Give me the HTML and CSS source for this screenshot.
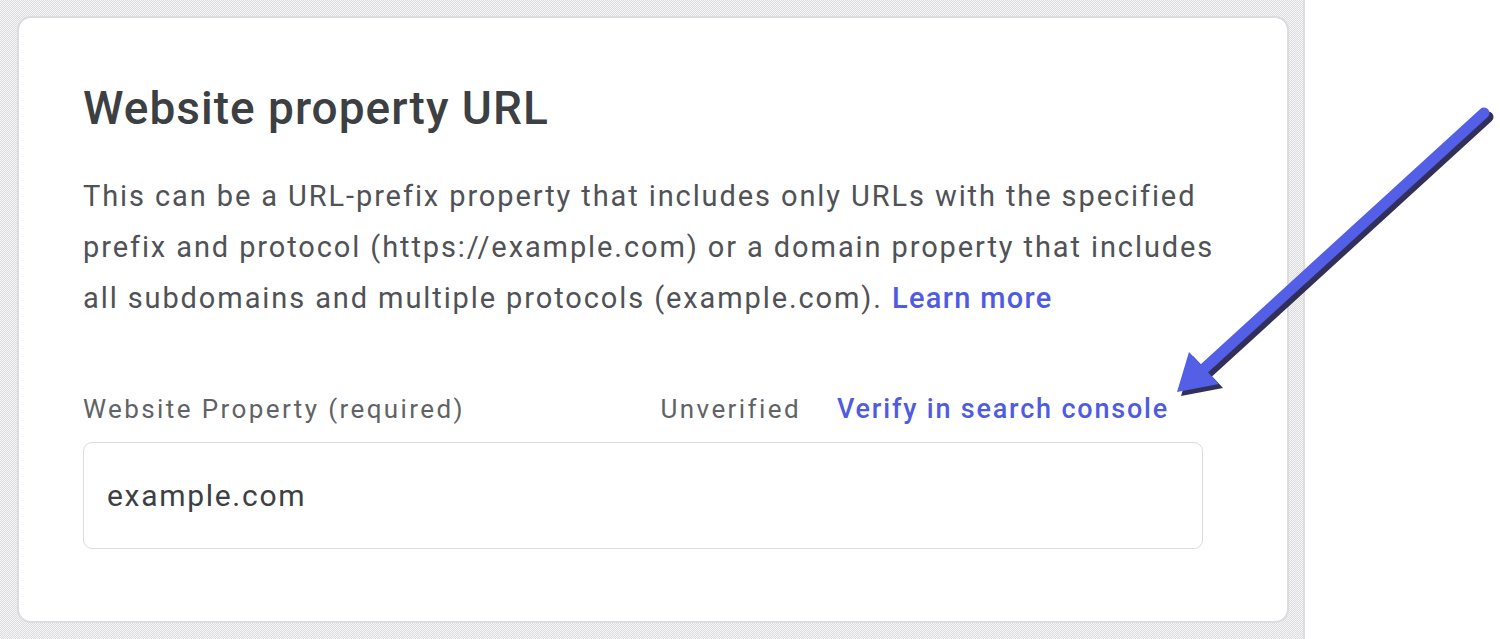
FILE: index.html
```html
<!DOCTYPE html>
<html>
<head>
<meta charset="utf-8">
<link rel="stylesheet" href="styles.css">
</head>
<body>
<div class="page">
  <div class="panel">
    <div class="card">
      <h1 class="title">Website property URL</h1>
      <p class="desc">This can be a URL-prefix property that includes only URLs with the specified prefix and protocol (https://example.com) or a domain property that includes all subdomains and multiple protocols (example.com). <a class="link">Learn more</a></p>
      <div class="field-head">
        <span class="label">Website Property (required)</span>
        <span class="status">Unverified</span>
        <a class="verify">Verify in search console</a>
      </div>
      <div class="input">example.com</div>
    </div>
  </div>
  <div class="blank"></div>
  <svg class="arrow" width="1500" height="639" viewBox="0 0 1500 639">
    <g transform="translate(4,4)" fill="#1c1a4a" stroke="#1c1a4a" opacity="0.9">
      <line x1="1484" y1="113" x2="1196" y2="376" stroke-width="11" stroke-linecap="round"/>
      <polygon points="1177,392 1189,352 1219,384" stroke="none"/>
    </g>
    <g fill="#525fe6" stroke="#525fe6">
      <line x1="1484" y1="113" x2="1196" y2="376" stroke-width="11" stroke-linecap="round"/>
      <polygon points="1177,392 1189,352 1219,384" stroke="none"/>
    </g>
  </svg>
</div>
</body>
</html>
```
FILE: styles.css
```css
html, body {
  margin: 0;
  padding: 0;
  background: #ffffff;
}
.page {
  position: relative;
  display: flex;
  width: 1500px;
  height: 639px;
  overflow: hidden;
}
.panel {
  width: 1305px;
  height: 639px;
  box-sizing: border-box;
  padding: 16px 14px 16px 17px;
  border-right: 2px solid #dedee2;
  background: repeating-conic-gradient(#dddddf 0 25%, #f5f5f6 0 50%) 0 0 / 2px 2px;
  flex-shrink: 0;
}
.blank {
  flex: 1;
  background: #ffffff;
}
.card {
  box-sizing: border-box;
  height: 607px;
  background: #ffffff;
  border: 2px solid #dcdce0;
  border-radius: 14px;
  padding: 0 64px 0 64px;
}
.title {
  margin: 63px 0 0 0;
  font-family: Roboto, "Liberation Sans", sans-serif;
  font-weight: 500;
  font-size: 46px;
  line-height: 54px;
  color: #3c4043;
  letter-spacing: 1px;
}
.desc {
  margin: 36px 0 0 0;
  font-family: Roboto, "Liberation Sans", sans-serif;
  font-size: 29px;
  line-height: 51px;
  letter-spacing: 1.9px;
  color: #4f5256;
}
.link {
  color: #4f5be2;
  font-weight: 500;
  letter-spacing: 1.3px;
}
.field-head {
  margin: 68px 20px 0 0;
  display: flex;
  align-items: baseline;
  font-family: Roboto, "Liberation Sans", sans-serif;
  font-size: 26px;
  line-height: 34px;
  letter-spacing: 2.4px;
  padding-right: 34px;
}
.label {
  color: #5f6368;
  flex: 1;
}
.status {
  color: #5f6368;
  margin-right: 36px;
}
.verify {
  color: #4f5be2;
  font-weight: 500;
  font-size: 27px;
  letter-spacing: 1.8px;
}
.input {
  margin: 16px 20px 0 0;
  height: 107px;
  box-sizing: border-box;
  border: 1px solid #dadce0;
  border-radius: 9px;
  padding: 0 23px;
  display: flex;
  align-items: center;
  font-family: Roboto, "Liberation Sans", sans-serif;
  font-size: 30px;
  letter-spacing: 1.7px;
  color: #3c4043;
}
.arrow {
  position: absolute;
  left: 0;
  top: 0;
  pointer-events: none;
}
```
